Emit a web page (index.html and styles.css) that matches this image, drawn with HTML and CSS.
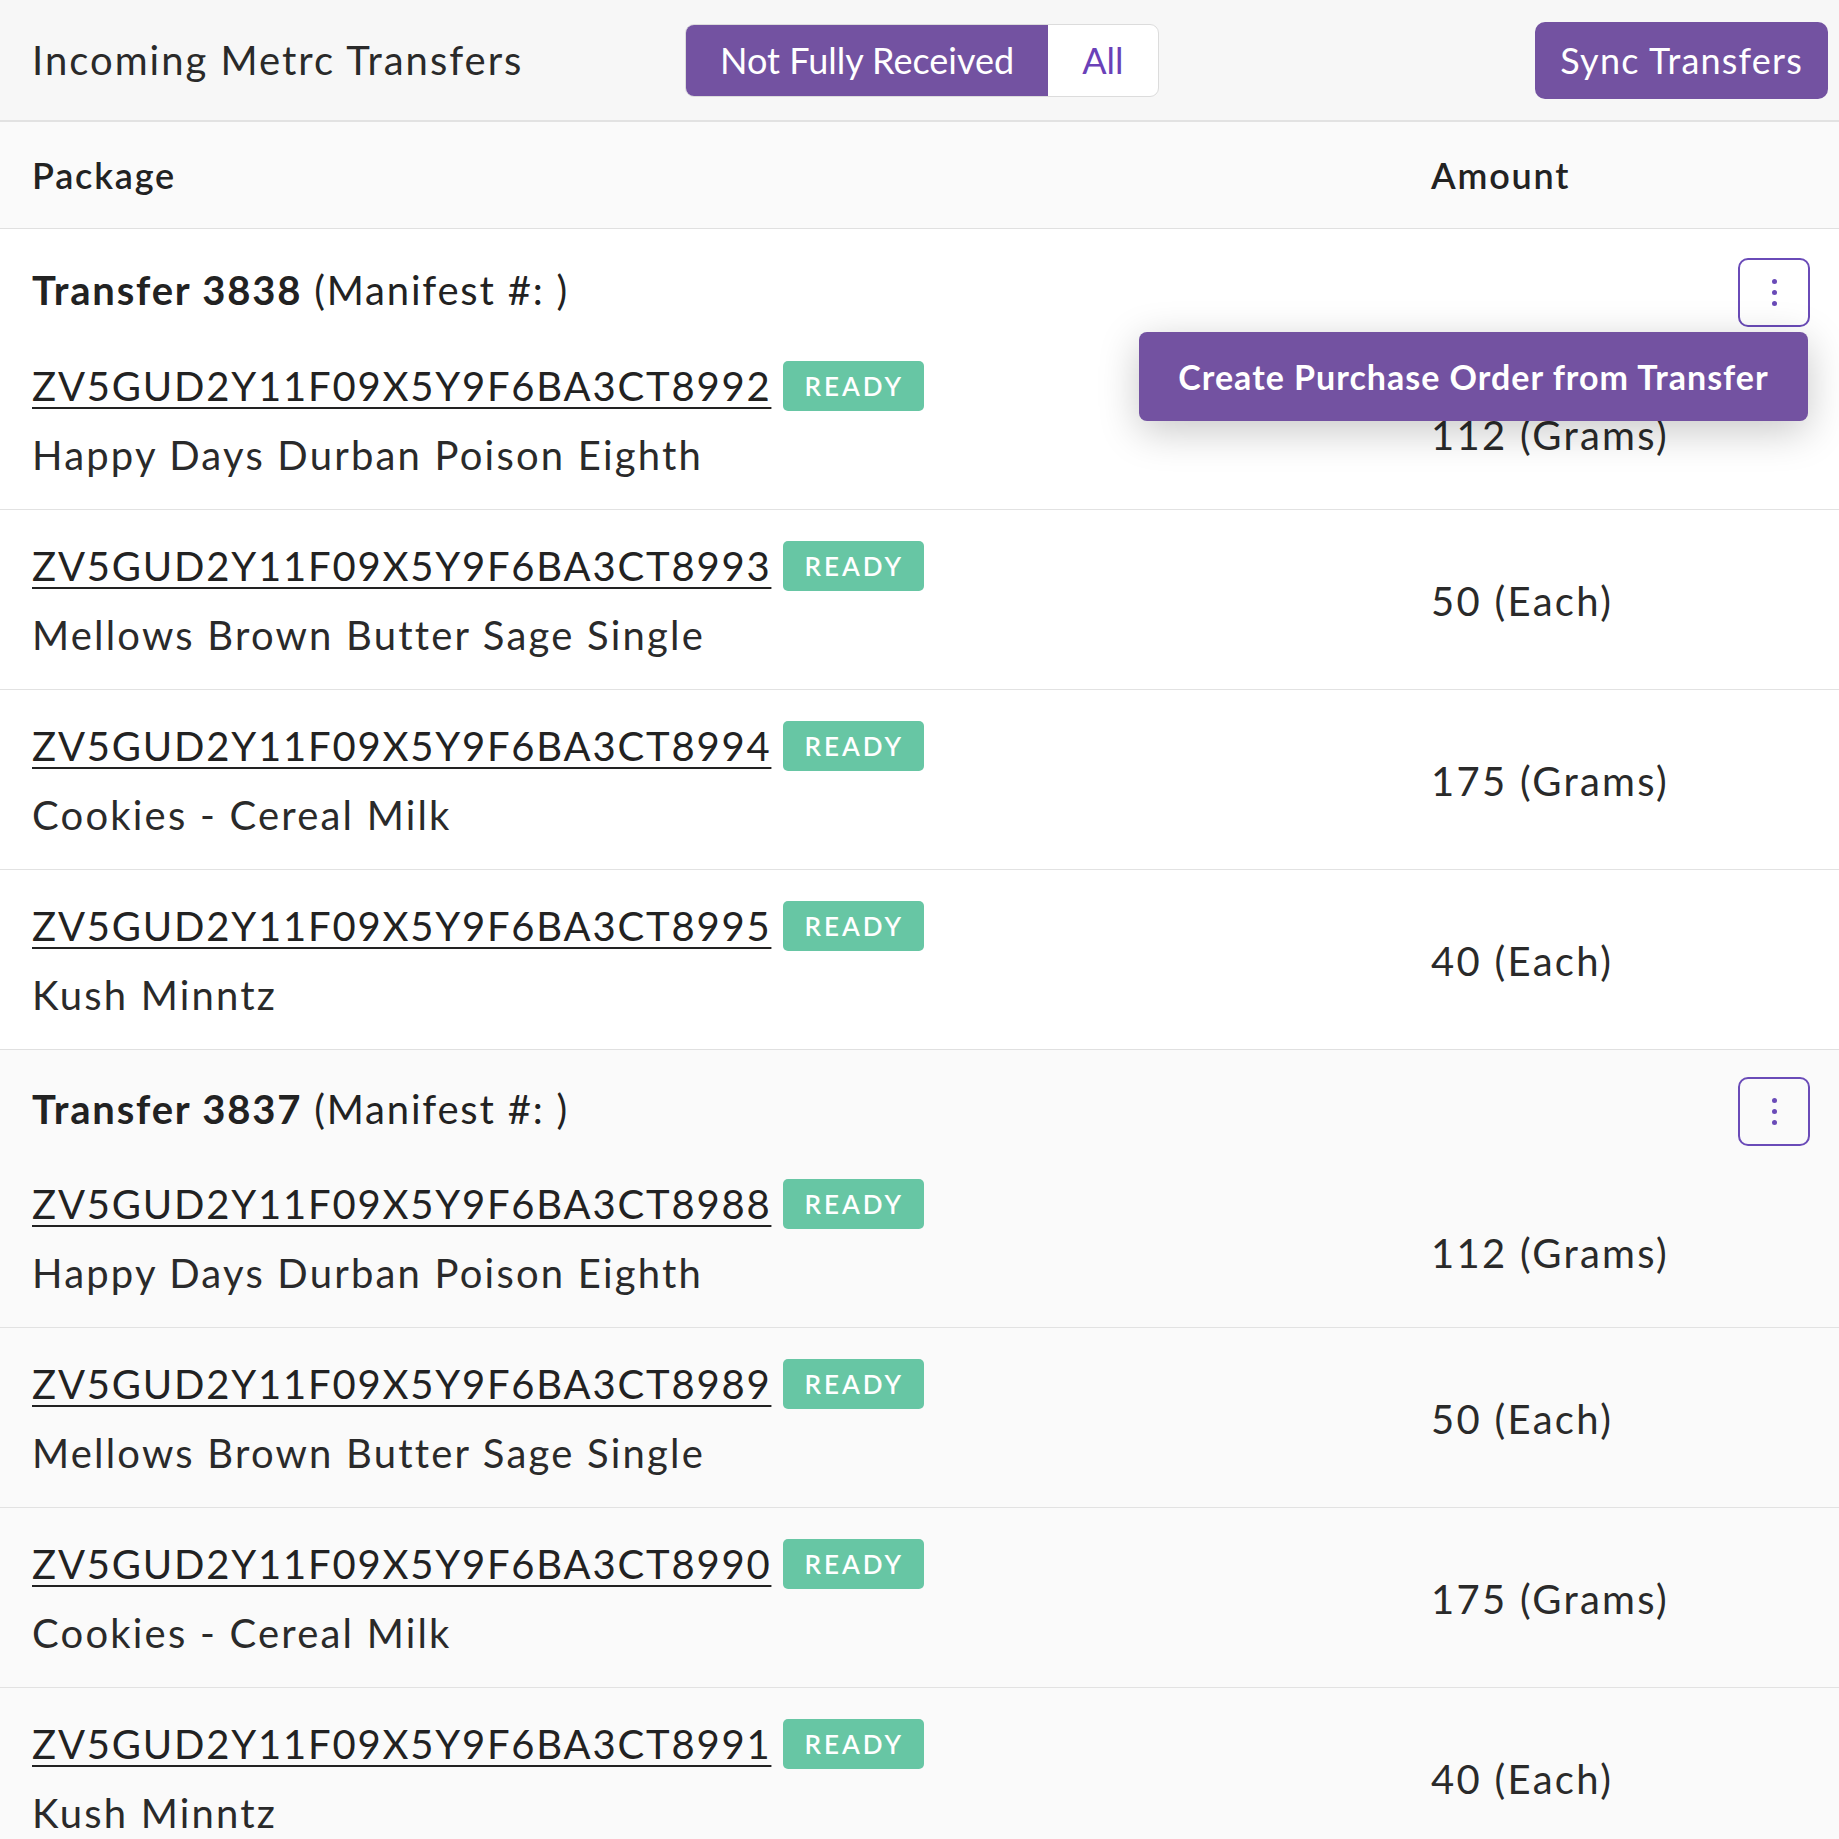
FILE: index.html
```html
<!DOCTYPE html>
<html lang="en">
<head>
    <meta charset="UTF-8">
    <meta name="viewport" content="width=device-width, initial-scale=1.0">
    <title>Incoming Metrc Transfers</title>
    <link rel="stylesheet" href="styles.css">
</head>
<body>

    <header class="topbar">
        <h1 class="topbar-title">Incoming Metrc Transfers</h1>
        <div class="segmented">
            <button class="seg-btn active">Not Fully Received</button>
            <button class="seg-btn">All</button>
        </div>
        <button class="sync-btn">Sync Transfers</button>
    </header>

    <div class="col-head">
        <div>Package</div>
        <div>Amount</div>
    </div>

    <section class="transfer">
        <div class="transfer-head">
            <div class="transfer-title"><b>Transfer 3838</b> (Manifest #: )</div>
            <button class="kebab"><span></span><span></span><span></span></button>
            <div class="menu">Create Purchase Order from Transfer</div>
        </div>

        <div class="pkg-row">
            <div class="pkg">
                <div class="pkg-id"><a href="#">ZV5GUD2Y11F09X5Y9F6BA3CT8992</a><span class="badge">READY</span></div>
                <div class="pkg-name">Happy Days Durban Poison Eighth</div>
            </div>
            <div class="amount">112 (Grams)</div>
        </div>
        <div class="pkg-row">
            <div class="pkg">
                <div class="pkg-id"><a href="#">ZV5GUD2Y11F09X5Y9F6BA3CT8993</a><span class="badge">READY</span></div>
                <div class="pkg-name">Mellows Brown Butter Sage Single</div>
            </div>
            <div class="amount">50 (Each)</div>
        </div>
        <div class="pkg-row">
            <div class="pkg">
                <div class="pkg-id"><a href="#">ZV5GUD2Y11F09X5Y9F6BA3CT8994</a><span class="badge">READY</span></div>
                <div class="pkg-name">Cookies - Cereal Milk</div>
            </div>
            <div class="amount">175 (Grams)</div>
        </div>
        <div class="pkg-row">
            <div class="pkg">
                <div class="pkg-id"><a href="#">ZV5GUD2Y11F09X5Y9F6BA3CT8995</a><span class="badge">READY</span></div>
                <div class="pkg-name">Kush Minntz</div>
            </div>
            <div class="amount">40 (Each)</div>
        </div>
    </section>

    <section class="transfer alt">
        <div class="transfer-head">
            <div class="transfer-title"><b>Transfer 3837</b> (Manifest #: )</div>
            <button class="kebab"><span></span><span></span><span></span></button>
        </div>

        <div class="pkg-row">
            <div class="pkg">
                <div class="pkg-id"><a href="#">ZV5GUD2Y11F09X5Y9F6BA3CT8988</a><span class="badge">READY</span></div>
                <div class="pkg-name">Happy Days Durban Poison Eighth</div>
            </div>
            <div class="amount">112 (Grams)</div>
        </div>
        <div class="pkg-row">
            <div class="pkg">
                <div class="pkg-id"><a href="#">ZV5GUD2Y11F09X5Y9F6BA3CT8989</a><span class="badge">READY</span></div>
                <div class="pkg-name">Mellows Brown Butter Sage Single</div>
            </div>
            <div class="amount">50 (Each)</div>
        </div>
        <div class="pkg-row">
            <div class="pkg">
                <div class="pkg-id"><a href="#">ZV5GUD2Y11F09X5Y9F6BA3CT8990</a><span class="badge">READY</span></div>
                <div class="pkg-name">Cookies - Cereal Milk</div>
            </div>
            <div class="amount">175 (Grams)</div>
        </div>
        <div class="pkg-row">
            <div class="pkg">
                <div class="pkg-id"><a href="#">ZV5GUD2Y11F09X5Y9F6BA3CT8991</a><span class="badge">READY</span></div>
                <div class="pkg-name">Kush Minntz</div>
            </div>
            <div class="amount">40 (Each)</div>
        </div>
    </section>

</body>
</html>
```

FILE: styles.css
```css
body {
    font-family: 'Lato', 'Noto Sans', sans-serif;
    margin: 0;
    padding: 0;
    background-color: #fafafa;
    color: #222;
}

/* top bar */
.topbar {
    display: flex;
    align-items: center;
    height: 120px;
    padding: 0 11px 0 32px;
    background-color: #f7f7f7;
    border-bottom: 2px solid #e2e2e2;
}

.topbar-title {
    margin: 0;
    font-size: 40px;
    font-weight: 400;
    letter-spacing: 2px;
    color: #2a2a2a;
    width: 653px;
}

.segmented {
    display: flex;
    height: 71px;
    border: 1px solid #dcdcdc;
    border-radius: 9px;
    overflow: hidden;
    background-color: #fff;
}

.seg-btn {
    font-family: inherit;
    font-size: 36px;
    border: none;
    background: none;
    color: #6a41b8;
    padding: 0 34px;
    cursor: pointer;
}

.seg-btn.active {
    background-color: #7352a1; /* purple */
    color: #fff;
}

.sync-btn {
    margin-left: auto;
    font-family: inherit;
    font-size: 36px;
    letter-spacing: 1.2px;
    height: 77px;
    padding: 0 25px;
    border: none;
    border-radius: 10px;
    background-color: #7352a1;
    color: #fff;
    cursor: pointer;
}

/* column headers */
.col-head {
    display: grid;
    grid-template-columns: 1fr 376px;
    align-items: center;
    height: 106px;
    padding: 0 32px;
    font-size: 36px;
    font-weight: 600;
    letter-spacing: 1.8px;
    background-color: #fafafa;
    border-bottom: 1px solid #e0e0e0;
}

/* transfer groups */
.transfer {
    position: relative;
    background-color: #fff;
    border-bottom: 1px solid #e0e0e0;
}

.transfer.alt {
    background-color: #fafafa;
}

.transfer-head {
    display: flex;
    justify-content: space-between;
    align-items: flex-start;
    padding: 29px 29px 3px 32px;
}

.transfer.alt .transfer-head {
    padding-top: 27px;
    padding-bottom: 2px;
}

.transfer-title {
    margin-top: 6px;
    line-height: 52px;
    font-size: 40px;
    letter-spacing: 1.8px;
}

.kebab {
    width: 72px;
    height: 69px;
    border: 2px solid #6a4bb8;
    border-radius: 10px;
    background: transparent;
    display: flex;
    flex-direction: column;
    align-items: center;
    justify-content: center;
    gap: 6px;
    cursor: pointer;
}

.kebab span {
    width: 5px;
    height: 5px;
    border-radius: 50%;
    background-color: #6a4bb8;
}

.menu {
    position: absolute;
    top: 103px;
    right: 31px;
    width: 669px;
    height: 89px;
    box-sizing: border-box;
    display: flex;
    align-items: center;
    justify-content: center;
    background-color: #7352a1;
    color: #fff;
    font-size: 34px;
    font-weight: 700;
    letter-spacing: 1px;
    border-radius: 8px;
    box-shadow: 0 10px 40px rgba(0, 0, 0, 0.22);
    z-index: 2;
}

.pkg-row {
    display: grid;
    grid-template-columns: 1fr 376px;
    align-items: center;
    padding: 30px 32px 28px;
    border-top: 1px solid #e2e2e2;
}

.transfer-head + .pkg-row {
    border-top: none;
}

.transfer-head + .pkg-row .amount {
    margin-top: 28px;
}

.pkg-id {
    display: flex;
    align-items: center;
    height: 52px;
    font-size: 40px;
    letter-spacing: 1.8px;
}

.pkg-id a {
    color: #222;
    text-decoration: underline;
    text-decoration-thickness: 2px;
    text-underline-offset: 6px;
}

.badge {
    margin-left: 12px;
    height: 50px;
    padding: 0 20px 0 21px;
    display: flex;
    align-items: center;
    background-color: #67c6a4;
    color: #fff;
    border-radius: 5px;
    font-size: 26px;
    font-weight: 600;
    letter-spacing: 3px;
}

.pkg-name {
    margin-top: 17px;
    height: 52px;
    line-height: 52px;
    font-size: 40px;
    letter-spacing: 2.2px;
    color: #2a2a2a;
}

.amount {
    font-size: 40px;
    letter-spacing: 2.3px;
    color: #2a2a2a;
}
```
